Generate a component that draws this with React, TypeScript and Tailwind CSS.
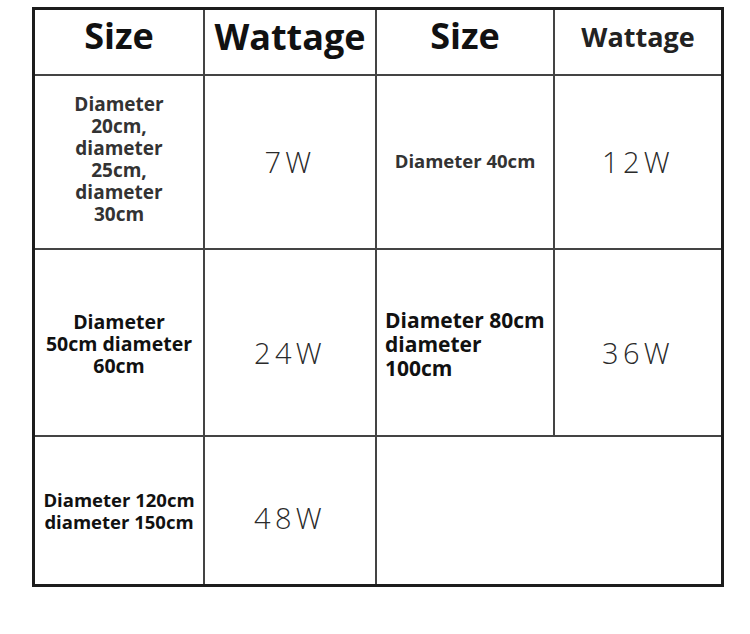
export default function App() {
  const watt = "text-[29px] font-light tracking-[0.15em] text-[#2a2a2a]";

  return (
    <div className="min-h-screen w-[750px] h-[634px] bg-white pt-[7px] pl-[32px]" style={{ fontFamily: '"Open Sans", "Noto Sans", sans-serif' }}>
      <div className="w-[692px] border-[3px] border-[#1c1c1c] grid grid-cols-[170px_172px_178px_166px] grid-rows-[66px_174px_187px_147px] text-[#111]">
        {/* header */}
        <div className="border-r-2 border-b-2 border-[#444] flex items-center justify-center pb-[12px]">
          <span className="text-[36px] font-bold">Size</span>
        </div>
        <div className="border-r-2 border-b-2 border-[#444] flex items-center justify-center pb-[10px]">
          <span className="text-[36px] font-bold">Wattage</span>
        </div>
        <div className="border-r-2 border-b-2 border-[#444] flex items-center justify-center pb-[12px]">
          <span className="text-[36px] font-bold">Size</span>
        </div>
        <div className="border-b-2 border-[#444] flex items-center justify-center pb-[10px]">
          <span className="text-[27px] font-bold text-[#222]">Wattage</span>
        </div>

        {/* row 1 */}
        <div className="border-r-2 border-b-2 border-[#444] flex items-center justify-center text-center pb-[6px]">
          <p className="text-[19px] font-bold leading-[22px] text-[#333]">
            Diameter<br />20cm,<br />diameter<br />25cm,<br />diameter<br />30cm
          </p>
        </div>
        <div className="border-r-2 border-b-2 border-[#444] flex items-center justify-center">
          <span className={watt}>7W</span>
        </div>
        <div className="border-r-2 border-b-2 border-[#444] flex items-center justify-center pb-[2px]">
          <span className="text-[18.5px] font-bold text-[#333]">Diameter 40cm</span>
        </div>
        <div className="border-b-2 border-[#444] flex items-center justify-center">
          <span className={watt}>12W</span>
        </div>

        {/* row 2 */}
        <div className="border-r-2 border-b-2 border-[#444] flex items-center justify-center text-center pt-[2px]">
          <p className="text-[19.5px] font-bold leading-[22px] text-[#111]">
            Diameter<br />50cm diameter<br />60cm
          </p>
        </div>
        <div className="border-r-2 border-b-2 border-[#444] flex items-center justify-center pt-[20px]">
          <span className={watt}>24W</span>
        </div>
        <div className="border-r-2 border-b-2 border-[#444] flex items-center pl-[8px] pt-[2px]">
          <p className="text-[21px] font-bold leading-[24px] text-[#111]">
            Diameter 80cm<br />diameter<br />100cm
          </p>
        </div>
        <div className="border-b-2 border-[#444] flex items-center justify-center pt-[20px]">
          <span className={watt}>36W</span>
        </div>

        {/* row 3 */}
        <div className="border-r-2 border-[#444] flex items-center justify-center text-center">
          <p className="text-[18.5px] font-bold leading-[22px] text-[#111]">
            Diameter 120cm<br />diameter 150cm
          </p>
        </div>
        <div className="border-r-2 border-[#444] flex items-center justify-center pt-[14px]">
          <span className={watt}>48W</span>
        </div>
        <div className="col-span-2" />
      </div>
    </div>
  );
}
